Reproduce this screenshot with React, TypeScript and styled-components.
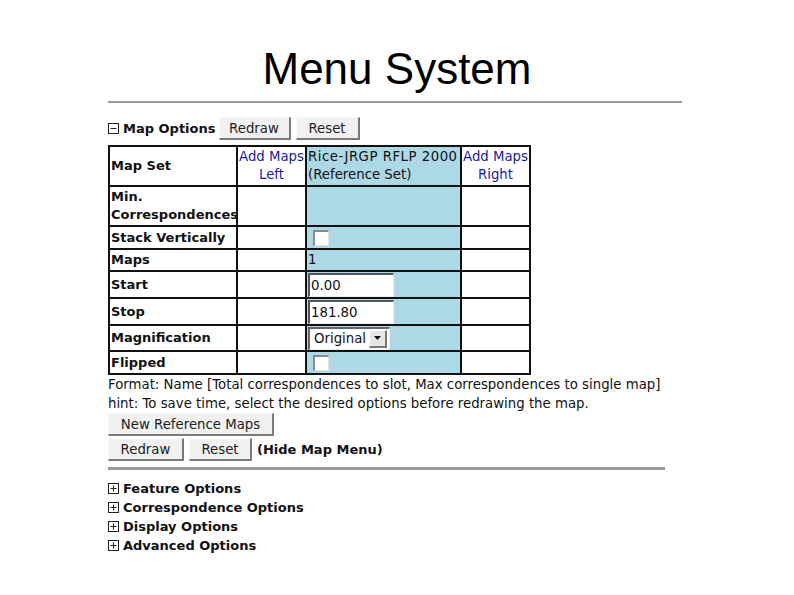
import styled, { createGlobalStyle } from 'styled-components';

const GlobalStyle = createGlobalStyle`
  html, body {
    margin: 0;
    padding: 0;
    background: #fff;
  }
`;

const Slide = styled.div`
  width: 794px;
  height: 595px;
  background: #fff;
  font-family: "DejaVu Sans", Verdana, sans-serif;
  font-size: 13px;
  color: #111;
  overflow: hidden;
`;

const Title = styled.h1`
  margin: 44px 0 0 0;
  height: 50px;
  line-height: 50px;
  font-family: "Liberation Sans", Arial, sans-serif;
  font-weight: normal;
  font-size: 44px;
  text-align: center;
  color: #000;
`;

const Content = styled.div`
  margin: 7px 0 0 108px;
  width: 574px;
`;

const Rule = styled.div<{ $w: number; $h: number; $top?: number }>`
  width: ${(p) => p.$w}px;
  height: ${(p) => p.$h}px;
  margin-top: ${(p) => p.$top ?? 0}px;
  background: #9a9a9a;
`;

const SectionHead = styled.div`
  display: flex;
  align-items: center;
  height: 23px;
  margin-top: 14px;
  margin-bottom: 5px;
`;

const Toggle = styled.span`
  display: inline-flex;
  align-items: center;
  gap: 4px;
  font-weight: bold;
  margin-right: 3px;
`;

const Btn = styled.button<{ $w: number }>`
  width: ${(p) => p.$w}px;
  height: 23px;
  padding: 0;
  margin-right: 5px;
  background: #f1f1f1;
  border: none;
  border-top: 1px solid #fafafa;
  border-left: 1px solid #fafafa;
  border-right: 2px solid #7a7a7a;
  border-bottom: 2px solid #7a7a7a;
  font-family: "DejaVu Sans", Verdana, sans-serif;
  font-size: 13.3px;
  color: #222;
`;

const Grid = styled.table`
  border-collapse: collapse;
  table-layout: fixed;
  width: 421px;
  border: 2px solid #111;
`;

const Row = styled.tr<{ $h: number }>`
  height: ${(p) => p.$h}px;
`;

const Label = styled.td`
  border: 2px solid #111;
  padding: 0 0 0 1px;
  font-weight: bold;
  line-height: 18px;
  vertical-align: middle;
  white-space: nowrap;
`;

const Cell = styled.td<{ $ref?: boolean }>`
  border: 2px solid #111;
  padding: 0 0 0 1px;
  font-size: 13.3px;
  line-height: 18px;
  vertical-align: middle;
  white-space: nowrap;
  background: ${(p) => (p.$ref ? '#add8e6' : '#fff')};
`;

const LinkCell = styled(Cell)`
  padding: 0;
  text-align: center;
  color: #1c1ca0;
`;

const SetName = styled.span`
  letter-spacing: 0.5px;
`;

const Check = styled.span`
  display: block;
  width: 13px;
  height: 13px;
  margin-left: 5px;
  background: #fff;
  border-top: 2px solid #8a8a8a;
  border-left: 2px solid #8a8a8a;
  border-right: 1px solid #e4e4e4;
  border-bottom: 1px solid #e4e4e4;
`;

const TextBox = styled.span`
  display: block;
  box-sizing: border-box;
  width: 86px;
  height: 24px;
  line-height: 22px;
  padding-left: 1px;
  background: #fff;
  border-top: 2px solid #555;
  border-left: 2px solid #555;
  border-right: 1px solid #eee;
  border-bottom: 1px solid #eee;
`;

const Select = styled.span`
  display: flex;
  align-items: center;
  justify-content: space-between;
  box-sizing: border-box;
  width: 82px;
  height: 23px;
  padding-left: 4px;
  background: #fff;
  border-top: 2px solid #666;
  border-left: 2px solid #666;
  border-right: 1px solid #eee;
  border-bottom: 1px solid #eee;
`;

const Arrow = styled.span`
  display: flex;
  align-items: center;
  justify-content: center;
  width: 15px;
  height: 15px;
  margin-right: 2px;
  background: #e6e6e6;
  border-top: 1px solid #fff;
  border-left: 1px solid #fff;
  border-right: 2px solid #777;
  border-bottom: 2px solid #777;
`;

const Note = styled.div`
  font-size: 13.3px;
  line-height: 19px;
`;

const ButtonRow = styled.div<{ $gap?: number }>`
  display: flex;
  align-items: center;
  margin-top: ${(p) => p.$gap ?? 0}px;
`;

const Bold = styled.span`
  font-weight: bold;
`;

const OptionList = styled.div`
  margin-top: 9px;
  display: flex;
  flex-direction: column;
`;

const Option = styled.div`
  display: flex;
  align-items: center;
  gap: 4px;
  height: 19px;
  font-weight: bold;
`;

const BoxIcon = ({ plus }: { plus?: boolean }) => (
  <svg width="11" height="11" viewBox="0 0 11 11">
    <rect x="0.5" y="0.5" width="10" height="10" fill="#fff" stroke="#222" />
    <line x1="2.5" y1="5.5" x2="8.5" y2="5.5" stroke="#222" />
    {plus && <line x1="5.5" y1="2.5" x2="5.5" y2="8.5" stroke="#222" />}
  </svg>
);

const App = () => {
  return (
    <Slide>
      <GlobalStyle />
      <Title>Menu System</Title>
      <Content>
        <Rule $w={574} $h={2} />
        <SectionHead>
          <Toggle>
            <BoxIcon />
            Map Options
          </Toggle>
          <Btn $w={72}>Redraw</Btn>
          <Btn $w={64}>Reset</Btn>
        </SectionHead>
        <Grid>
          <colgroup>
            <col style={{ width: 128 }} />
            <col style={{ width: 69 }} />
            <col style={{ width: 155 }} />
            <col style={{ width: 69 }} />
          </colgroup>
          <tbody>
            <Row $h={40}>
              <Label>Map Set</Label>
              <LinkCell>
                Add Maps
                <br />
                Left
              </LinkCell>
              <Cell $ref>
                <SetName>Rice-JRGP RFLP 2000</SetName>
                <br />
                (Reference Set)
              </Cell>
              <LinkCell>
                Add Maps
                <br />
                Right
              </LinkCell>
            </Row>
            <Row $h={40}>
              <Label>
                Min.
                <br />
                Correspondences
              </Label>
              <Cell />
              <Cell $ref />
              <Cell />
            </Row>
            <Row $h={23}>
              <Label>Stack Vertically</Label>
              <Cell />
              <Cell $ref>
                <Check />
              </Cell>
              <Cell />
            </Row>
            <Row $h={22}>
              <Label>Maps</Label>
              <Cell />
              <Cell $ref>1</Cell>
              <Cell />
            </Row>
            <Row $h={27}>
              <Label>Start</Label>
              <Cell />
              <Cell $ref>
                <TextBox>0.00</TextBox>
              </Cell>
              <Cell />
            </Row>
            <Row $h={27}>
              <Label>Stop</Label>
              <Cell />
              <Cell $ref>
                <TextBox>181.80</TextBox>
              </Cell>
              <Cell />
            </Row>
            <Row $h={26}>
              <Label>Magnification</Label>
              <Cell />
              <Cell $ref>
                <Select>
                  Original
                  <Arrow>
                    <svg width="7" height="4" viewBox="0 0 7 4">
                      <polygon points="0,0 7,0 3.5,4" fill="#111" />
                    </svg>
                  </Arrow>
                </Select>
              </Cell>
              <Cell />
            </Row>
            <Row $h={23}>
              <Label>Flipped</Label>
              <Cell />
              <Cell $ref>
                <Check />
              </Cell>
              <Cell />
            </Row>
          </tbody>
        </Grid>
        <Note>
          Format: Name [Total correspondences to slot, Max correspondences to single map]
          <br />
          hint: To save time, select the desired options before redrawing the map.
        </Note>
        <ButtonRow>
          <Btn $w={166}>New Reference Maps</Btn>
        </ButtonRow>
        <ButtonRow $gap={2}>
          <Btn $w={76}>Redraw</Btn>
          <Btn $w={63}>Reset</Btn>
          <Bold>(Hide Map Menu)</Bold>
        </ButtonRow>
        <Rule $w={557} $h={3} $top={6} />
        <OptionList>
          <Option>
            <BoxIcon plus />
            Feature Options
          </Option>
          <Option>
            <BoxIcon plus />
            Correspondence Options
          </Option>
          <Option>
            <BoxIcon plus />
            Display Options
          </Option>
          <Option>
            <BoxIcon plus />
            Advanced Options
          </Option>
        </OptionList>
      </Content>
    </Slide>
  );
};

export default App;
